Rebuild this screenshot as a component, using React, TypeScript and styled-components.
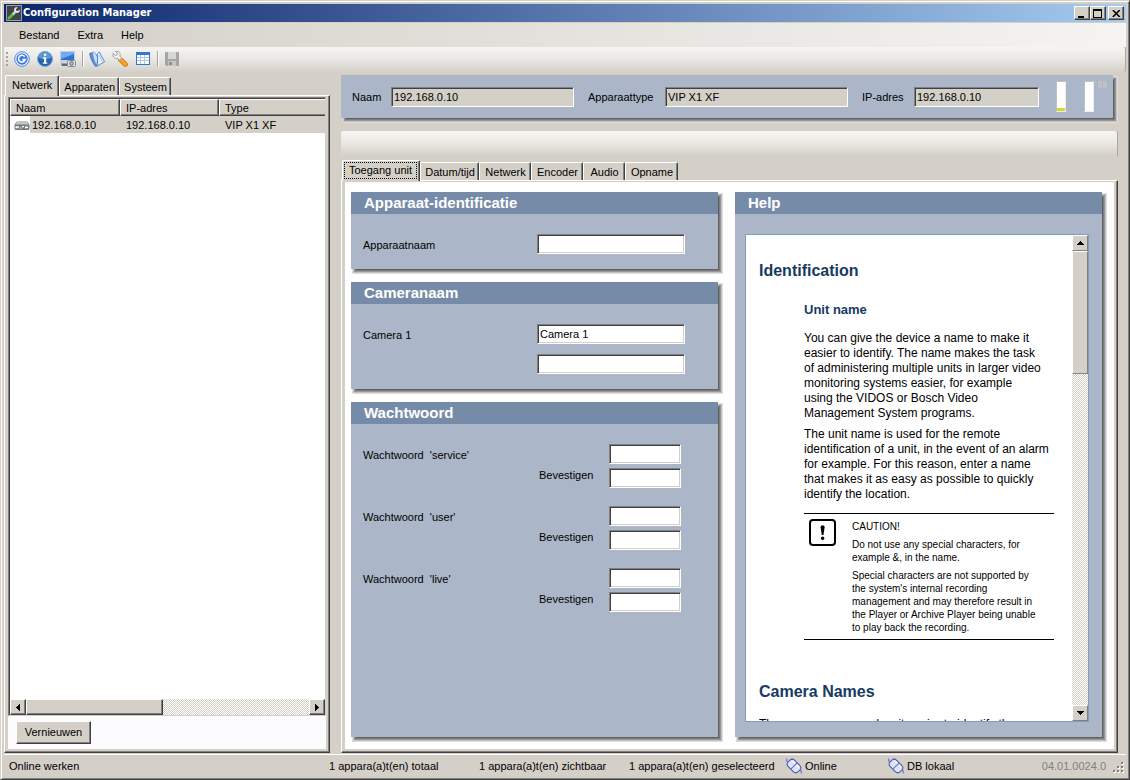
import React from "react";
import styled, { createGlobalStyle, css } from "styled-components";

const c = {
  face: "#d4d0c8",
  dark: "#404040",
  shade: "#808080",
  light: "#ffffff",
  panel: "#abb7c9",
  heading: "#768ba8",
  navy: "#163a63",
  boxLine: "#7f9db9",
};

const raised = css`
  background: ${c.face};
  border: 1px solid;
  border-color: ${c.light} ${c.dark} ${c.dark} ${c.light};
  box-shadow: inset -1px -1px 0 ${c.shade};
`;

const flat = css`
  border-color: ${c.light} ${c.shade} ${c.shade} ${c.light};
  box-shadow: none;
`;

const dropShadow = css`
  box-shadow:
    3px 3px 0 -2px #606060,
    3px 3px 0 -1px #7c7c7c,
    3px 3px 0 0 #979797,
    3px 3px 0 1px #c2c2c2,
    3px 3px 0 2px #dedede;
`;

const dither = css`
  background: repeating-conic-gradient(#ffffff 0 25%, #d4d0c8 0 50%) 0 0 / 2px 2px;
`;

const Global = createGlobalStyle`
  *, *::before, *::after { box-sizing: border-box; }
  body {
    margin: 0;
    background: ${c.face};
    color: #000;
    font: 11px/13px "Liberation Sans", Arial, sans-serif;
  }
  button, input { font: inherit; color: inherit; }
  label { padding-top: 2px; }
  svg { display: block; }
`;

const Window = styled.div`
  display: flex;
  flex-direction: column;
  height: 100vh;
  min-height: 660px;
  padding: 2px;
  background: ${c.face};
  border: 1px solid;
  border-color: ${c.face} ${c.dark} ${c.dark} ${c.face};
  box-shadow: inset 1px 1px 0 ${c.light}, inset -1px -1px 0 ${c.shade};
`;

const Frame = styled.div`
  display: flex;
  flex-direction: column;
  flex: 1;
  min-height: 0;
  padding: 1px;
`;

const TitleBar = styled.header`
  display: flex;
  align-items: center;
  height: 18px;
  flex: none;
  padding: 0 2px;
  margin-bottom: 1px;
  background: linear-gradient(90deg, #0a246a, #a6caf0);
`;

const Title = styled.h1`
  flex: 1;
  margin: 0 0 0 1px;
  color: #fff;
  font: bold 11px/16px "DejaVu Sans Condensed", "DejaVu Sans", sans-serif;
`;

const CaptionButton = styled.button<{ $apart?: boolean }>`
  ${raised}
  display: flex;
  align-items: center;
  justify-content: center;
  width: 16px;
  height: 14px;
  padding: 0;
  margin-left: ${(p) => (p.$apart ? 2 : 0)}px;
`;

const MenuBar = styled.nav`
  display: flex;
  align-items: center;
  flex: none;
  height: 24px;
  padding-left: 6px;
  background: linear-gradient(90deg, ${c.face}, #f5f4f2);
`;

const MenuItem = styled.button`
  padding: 0 9px;
  border: 0;
  background: none;
`;

const ToolBar = styled.div`
  display: flex;
  align-items: center;
  flex: none;
  height: 25px;
  padding: 0 0 1px 2px;
  border-right: 1px solid #a9a69f;
  border-radius: 0 3px 3px 0;
  background: linear-gradient(#f6f5f3, #e9e7e3 50%, ${c.face});
`;

const Grip = styled.span`
  width: 2px;
  height: 14px;
  margin-right: 2px;
  background: repeating-linear-gradient(#a5a29b 0 2px, transparent 2px 4px);
`;

const ToolButton = styled.button`
  display: flex;
  justify-content: center;
  width: 23px;
  padding: 0;
  border: 0;
  background: none;
`;

const Divider = styled.span`
  width: 2px;
  height: 16px;
  margin: 0 1px 0 3px;
  border-left: 1px solid #a5a29b;
  border-right: 1px solid #fff;
`;

const Workspace = styled.div`
  display: flex;
  flex: 1;
  min-height: 0;
  gap: 11px;
  padding: 3px 8px 0 0;
`;

const Sidebar = styled.aside`
  display: flex;
  flex-direction: column;
  flex: 0 0 326px;
  min-height: 0;
`;

const Main = styled.main`
  display: flex;
  flex-direction: column;
  flex: 1;
  min-width: 0;
  min-height: 0;
`;

const Tabs = styled.div`
  display: flex;
  align-items: flex-end;
  flex: none;
  height: 20px;
  padding-left: 1px;
`;

const Tab = styled.button<{ $active?: boolean; $width?: number }>`
  ${(p) => p.$width && `width: ${p.$width}px;`}
  height: 18px;
  padding: 1px 3px 0 4px;
  background: ${c.face};
  border: 1px solid;
  border-color: ${c.light} ${c.dark} transparent ${c.light};
  border-bottom: 0;
  border-radius: 2px 2px 0 0;
  box-shadow: inset -1px 0 0 ${c.shade};
  white-space: nowrap;
  ${(p) =>
    p.$active &&
    css`
      position: relative;
      height: 21px;
      margin-bottom: -1px;
      padding: 0 6px 2px;
    `}
`;

const FocusTab = styled(Tab)`
  padding: 0 2px 2px 1px;
`;

const FocusRing = styled.span`
  display: block;
  padding: 1px 4px;
  border: 1px dotted #000;
`;

const TabPane = styled.section`
  ${raised}
  display: flex;
  flex: 1;
  min-height: 0;
`;

const SidePane = styled(TabPane)`
  flex-direction: column;
  padding: 1px 3px 3px;
`;

const ListView = styled.div`
  display: flex;
  flex-direction: column;
  flex: 1;
  min-height: 0;
  background: #fff;
  border: 1px solid;
  border-color: ${c.shade} ${c.face} ${c.face} ${c.shade};
  box-shadow: inset 1px 1px 0 ${c.dark};
  padding: 1px 0 0 1px;
`;

const Devices = styled.table`
  width: 100%;
  flex: none;
  table-layout: fixed;
  border-collapse: separate;
  border-spacing: 0;
  text-align: left;
`;

const HeadCell = styled.th<{ $width?: number }>`
  ${raised}
  width: ${(p) => (p.$width ? p.$width + "px" : "auto")};
  height: 17px;
  padding: 2px 5px 0;
  font-weight: normal;
  &:last-child {
    border-right: 0;
    box-shadow: inset 0 -1px 0 ${c.shade};
  }
`;

const Cell = styled.td`
  height: 17px;
  padding: 2px 6px 0;
  background: ${c.face};
`;

const DeviceCell = styled(Cell)`
  padding: 2px 0 0 4px;
  background: linear-gradient(90deg, #fff 20px, ${c.face} 20px);
`;

const DeviceName = styled.span`
  display: flex;
  align-items: center;
  gap: 2px;
`;

const Scroll = styled.div<{ $vertical?: boolean }>`
  ${dither}
  display: flex;
  flex: none;
  flex-direction: ${(p) => (p.$vertical ? "column" : "row")};
  justify-content: space-between;
  ${(p) => (p.$vertical ? "width: 16px;" : "height: 16px; margin-top: auto;")}
`;

const ScrollButton = styled.button<{ $flat?: boolean }>`
  ${raised}
  ${(p) => p.$flat && flat}
  display: flex;
  align-items: center;
  justify-content: center;
  flex: none;
  width: 16px;
  height: 16px;
  padding: 0;
`;

const Thumb = styled.div<{ $vertical?: boolean }>`
  ${raised}
  ${(p) => p.$vertical && flat}
  flex: 0 0 ${(p) => (p.$vertical ? 123 : 137)}px;
  margin: ${(p) => (p.$vertical ? "0 0 auto" : "0 auto 0 0")};
`;

const SideFooter = styled.div`
  flex: none;
  padding: 5px 8px;
  background: #fcfcfe;
`;

const PushButton = styled.button`
  ${raised}
  width: 75px;
  height: 23px;
  padding: 0;
`;

const UnitBar = styled.section`
  ${dropShadow}
  display: flex;
  flex: none;
  height: 43px;
  margin-right: 5px;
  padding: 6px 6px 6px 11px;
  background: ${c.panel};
`;

const UnitField = styled.div<{ $label: number; $grow: number }>`
  display: grid;
  grid-template-columns: ${(p) => p.$label}px 1fr;
  align-items: center;
  flex: ${(p) => p.$grow} 1 ${(p) => p.$label + p.$grow}px;
  min-width: 0;
  margin-right: 14px;
`;

const Field = styled.input`
  width: 100%;
  min-width: 0;
  height: 20px;
  padding: 1px 2px 2px;
  background: #fff;
  border: 1px solid;
  border-color: ${c.shade} ${c.light} ${c.light} ${c.shade};
  border-radius: 0;
  box-shadow: inset 1px 1px 0 ${c.dark}, inset -1px -1px 0 ${c.face};
  outline: 0;
  &:read-only {
    padding: 2px 2px 1px;
    background: ${c.face};
  }
`;

const Meters = styled.div`
  display: flex;
  flex: none;
  margin-left: 3px;
`;

const Meter = styled.span<{ $level: number }>`
  width: 10px;
  height: 31px;
  margin-right: 18px;
  border: 1px solid;
  border-color: #c0c0c0 #eeeeee #eeeeee #c0c0c0;
  background: linear-gradient(0deg, #d3da2f ${(p) => p.$level}px, #fff ${(p) => p.$level}px);
  & + & {
    margin-right: 4px;
  }
`;

const Marker = styled.span`
  width: 4px;
  height: 7px;
  background: #c0c0c0;
  & + & {
    margin-left: 1px;
  }
`;

const EmptyBar = styled.div`
  flex: none;
  height: 25px;
  margin: 13px 0 4px;
  border-right: 1px solid #a9a69f;
  border-radius: 2px 3px 0 2px;
  background: linear-gradient(#f6f5f3, #e9e7e3 50%, ${c.face});
`;

const MainPane = styled(TabPane)`
  padding: 1px 3px 3px;
`;

const Columns = styled.div`
  display: grid;
  grid-template-columns: 1fr 1fr;
  gap: 17px;
  flex: 1;
  min-width: 0;
  min-height: 0;
  padding: 10px 12px 12px 6px;
  background: #fff;
`;

const Column = styled.div`
  display: flex;
  flex-direction: column;
  gap: 13px;
  min-width: 0;
  min-height: 0;
`;

const Group = styled.section<{ $fill?: boolean }>`
  ${dropShadow}
  display: flex;
  flex-direction: column;
  flex: ${(p) => (p.$fill ? "1 1 0" : "none")};
  min-height: 0;
  background: ${c.panel};
`;

const GroupTitle = styled.h2`
  flex: none;
  margin: 0;
  padding: 0 13px;
  background: ${c.heading};
  color: #fff;
  font-size: 15px;
  line-height: 22px;
`;

const Form = styled.div<{ $gap: number }>`
  display: flex;
  flex-direction: column;
  gap: ${(p) => p.$gap}px;
  padding: 20px 33px 15px 12px;
`;

const Row = styled.div`
  display: grid;
  grid-template-columns: 1fr 148px;
  align-items: center;
`;

const PasswordRows = styled.div`
  display: grid;
  grid-template-columns: 1fr 70px 72px;
  align-items: center;
  gap: 4px 0;
  padding-right: 4px;
`;

const WideLabel = styled.label`
  grid-column: 1 / 3;
  white-space: pre;
`;

const ConfirmLabel = styled.label`
  grid-column: 2;
  padding: 0 0 5px;
`;

const HelpBox = styled.div`
  display: flex;
  flex: 1 1 0;
  min-height: 0;
  margin: 20px 13px 15px 10px;
  background: #fff;
  border: 1px solid ${c.boxLine};
`;

const Article = styled.article`
  flex: 1;
  min-width: 0;
  overflow: hidden;
  padding: 26px 18px 0 13px;
  font-size: 12px;
  line-height: 15px;
`;

const Topic = styled.h3`
  margin: 0 0 15px;
  color: ${c.navy};
  font-size: 16px;
  line-height: 20px;
`;

const Indent = styled.div`
  margin: 0 0 42px 45px;
`;

const SubTopic = styled.h4`
  margin: 21px 0 13px;
  color: ${c.navy};
  font-size: 13px;
  line-height: 16px;
`;

const Text = styled.p`
  margin: 0 0 6px;
  white-space: nowrap;
`;

const Caution = styled.div`
  display: flex;
  gap: 15px;
  margin-top: 11px;
  padding: 5px 0 5px 5px;
  border: solid #000;
  border-width: 1px 0;
`;

const CautionText = styled.div`
  display: flex;
  flex-direction: column;
  gap: 5px;
  padding-top: 1px;
  font-size: 10px;
  line-height: 13px;
  white-space: nowrap;
  p {
    margin: 0;
  }
`;

const StatusBar = styled.footer`
  display: grid;
  grid-template-columns: 320px 150px 150px 157px 102px 1fr auto 20px;
  align-items: center;
  flex: none;
  height: 22px;
  margin-top: 1px;
  padding: 1px 0 0 5px;
  border-top: 1px solid #fff;
  white-space: nowrap;
`;

const Connection = styled.span`
  display: flex;
  align-items: center;
  gap: 3px;
`;

const Version = styled.span`
  color: ${c.shade};
`;

const Corner = styled.span`
  align-self: end;
  justify-self: end;
  padding: 0 1px 2px 0;
`;

function Arrow({ dir }: { dir: "up" | "down" | "left" | "right" }) {
  const paths = {
    up: "M3 0h1v1h1v1h1v1h1v1H0V3h1V2h1V1h1z",
    down: "M0 0h7v1H6v1H5v1H4v1H3V3H2V2H1V1H0z",
    left: "M4 0v7H3V6H2V5H1V4H0V3h1V2h1V1h1V0z",
    right: "M0 0v7h1V6h1V5h1V4h1V3H3V2H2V1H1V0z",
  };
  return (
    <svg width="7" height="7" viewBox={dir === "up" || dir === "down" ? "0 -1 7 7" : "-1 0 7 7"} shapeRendering="crispEdges" aria-hidden="true">
      <path d={paths[dir]} />
    </svg>
  );
}

const AppIcon = () => (
  <svg width="16" height="16" viewBox="0 0 16 16" aria-hidden="true">
    <rect x=".5" y=".5" width="15" height="15" fill="#414549" stroke="#9aa0a6" />
    <path d="M3 13l4.200-4" stroke="#52c234" strokeWidth="2.800" strokeLinecap="round" />
    <path d="M6.800 9.300l3-2.900" stroke="#d0d4d6" strokeWidth="2.400" />
    <path d="M9.200 2.600C7.900 3.600 7.600 5.600 8.700 6.900s3.300 1.400 4.500.2c.7-.7 1-1.600.9-2.500L12 6.100 10.300 5.700 9.900 4.200l1.900-1.700C10.900 2 10 2.100 9.200 2.600z" fill="#e4e6e8" />
  </svg>
);

const GlobeIcon = () => (
  <svg width="16" height="16" viewBox="0 0 16 16" aria-hidden="true">
    <circle cx="8" cy="8" r="7.300" fill="#f4f8ff" stroke="#4a84e4" />
    <circle cx="8" cy="8" r="5.700" fill="#3a78e0" />
    <path d="M10.700 5.700A3.400 3.400 0 1 0 11.200 8.600H8.300" fill="none" stroke="#fff" strokeWidth="1.600" />
  </svg>
);

const InfoIcon = () => (
  <svg width="16" height="16" viewBox="0 0 16 16" aria-hidden="true">
    <circle cx="8" cy="8" r="7.500" fill="#2465b0" stroke="#7aa6d8" />
    <path d="M1.500 6.500A6.600 6.600 0 0 1 14.500 6.500C11 8.500 5 8.500 1.500 6.500z" fill="#5e97d4" />
    <path d="M7 2.800h2.200v2H7zM6 6.300h3.200v5.200h1.100v1.300H5.900v-1.300H7V7.600H6z" fill="#fff" />
  </svg>
);

const MonitorIcon = () => (
  <svg width="16" height="16" viewBox="0 0 16 16" aria-hidden="true">
    <rect x="0.500" y="0.500" width="14" height="9" fill="#2f72d0" stroke="#c9ced6" />
    <path d="M1 1h13v2L1 8z" fill="#6fabf2" />
    <path d="M0 10h15v2.500H0z" fill="#cfd2d6" />
    <path d="M1 12.500h7V15H2z" fill="#666c74" />
    <rect x="7.500" y="9.500" width="8" height="6" rx="1" fill="#e3e5e8" stroke="#858b93" />
    <circle cx="11.500" cy="12.500" r="1.900" fill="#a9b8cb" stroke="#5c636c" strokeWidth=".8" />
  </svg>
);

const BookIcon = () => (
  <svg width="16" height="16" viewBox="0 0 16 16" aria-hidden="true">
    <path d="M.7 2.500L3.500 1.500 8 5v10l-1.600.2C3.500 12 1.500 7 .7 2.500z" fill="#5b93e6" stroke="#2458ac" strokeWidth=".7" />
    <path d="M3.500 1.500L4.500.7C6.500 2 8 4.500 8.500 7L8 15C5.500 11 4 6 3.500 1.500z" fill="#cfe1fa" stroke="#4d80d4" strokeWidth=".6" />
    <path d="M8.200 3L10.300.9l5.200 9.900L8 15.200C8.800 11 8.800 7 8.200 3z" fill="#e6effc" stroke="#3a70c8" strokeWidth=".8" />
    <path d="M10 4l3.500 6.500" stroke="#a4c3ef" />
  </svg>
);

const WrenchIcon = () => (
  <svg width="16" height="16" viewBox="0 0 16 16" aria-hidden="true">
    <path d="M8.300 8.500l5.200 5" stroke="#c76a08" strokeWidth="4.600" strokeLinecap="round" />
    <path d="M8.300 8.500l5.200 5" stroke="#fba41c" strokeWidth="3.200" strokeLinecap="round" />
    <path d="M1 2.300l2.400 2.200 1.700-.5.300-1.800L3.300.5C5.300-.1 7.400.8 8 2.600c.3 1 .2 1.800-.2 2.600l2 1.900L7.700 9.300 5.700 7.300C3.200 8.300.2 6.100 1 2.300z" fill="#f2f2f2" stroke="#969ba2" strokeWidth=".9" />
  </svg>
);

const GridIcon = () => (
  <svg width="16" height="16" viewBox="0 0 16 16" shapeRendering="crispEdges" aria-hidden="true">
    <path d="M1 1h14v13H1z" fill="#3b74c6" />
    <path d="M2 4h12v9H2z" fill="#a9c6ee" />
    <path d="M2 4h3v2H2zM6 4h3v2H6zM10 4h4v2h-4zM2 7h3v2H2zM6 7h3v2H6zM10 7h4v2h-4zM2 10h3v3H2zM6 10h3v3H6zM10 10h4v3h-4z" fill="#fafcff" />
  </svg>
);

const SaveIcon = () => (
  <svg width="16" height="16" viewBox="0 0 16 16" shapeRendering="crispEdges" aria-hidden="true">
    <path d="M1 1h14v14H2l-1-1z" fill="#a6a6a6" />
    <path d="M4 1h8v7H4z" fill="#d6d6d6" />
    <path d="M4 10h8v5H4z" fill="#c6c6c6" />
    <path d="M5 11h3v3H5z" fill="#8e8e8e" />
  </svg>
);

const DeviceIcon = () => (
  <svg width="16" height="13" viewBox="0 0 16 13" aria-hidden="true">
    <path d="M4 2.500h8c1.500 0 3.500 2.500 3.500 4v3c0 .8-.6 1.500-1.500 1.500H2C1 11 .5 10.300.5 9.500v-3c0-1.500 2-4 3.500-4z" fill="#77797b" />
    <path d="M4.200 2.500h7.600c1 0 2.400 1.500 2.900 3H1.300c.5-1.500 1.900-3 2.900-3z" fill="#c3c5c6" />
    <path d="M1.500 7.200h3.200v2H1.500zM6 8.500h1.500v1H6zM8 7h2v1.200H8zM11 7.500h3v1.700h-3z" fill="#fff" />
    <path d="M5.300 7h1v1h-1z" fill="#5fc86a" />
  </svg>
);

const PlugIcon = () => (
  <svg width="16" height="16" viewBox="0 0 16 16" aria-hidden="true">
    <path d="M.7.500v2.500l2.300 1M15.300 15.500v-2.500l-2.300-1" fill="none" stroke="#6d7ad0" strokeWidth="1.200" />
    <g transform="rotate(45 8 8)">
      <rect x="1" y="3.500" width="14" height="9" rx="3.500" fill="#dfe4fb" stroke="#4554ae" />
      <path d="M8 3.500v9" stroke="#6675cf" strokeWidth="1.200" />
      <path d="M3.500 5.500h3M9.500 5.500h3" stroke="#fff" strokeWidth="1.400" />
    </g>
  </svg>
);

const CautionIcon = () => (
  <svg width="28" height="28" viewBox="0 0 28 28" aria-hidden="true">
    <rect x="1" y="1" width="25" height="25" rx="3" fill="#fff" stroke="#000" strokeWidth="2" />
    <path d="M11.600 8.200a2 2 0 0 1 4 0L14.500 16h-1.800z" />
    <circle cx="13.600" cy="19.200" r="1.700" />
  </svg>
);

const SizeGrip = () => (
  <svg width="12" height="12" viewBox="0 0 12 12" shapeRendering="crispEdges" aria-hidden="true">
    <path d="M9 1h2v2H9zM5 5h2v2H5zM9 5h2v2H9zM1 9h2v2H1zM5 9h2v2H5zM9 9h2v2H9z" fill="#fff" />
    <path d="M8 0h2v2H8zM4 4h2v2H4zM8 4h2v2H8zM0 8h2v2H0zM4 8h2v2H4zM8 8h2v2H8z" fill="#808080" />
  </svg>
);

const tools = [
  [
    ["Web", GlobeIcon],
    ["Info", InfoIcon],
    ["Live", MonitorIcon],
  ],
  [
    ["Handboek", BookIcon],
    ["Instellingen", WrenchIcon],
    ["Tabel", GridIcon],
  ],
  [["Opslaan", SaveIcon]],
] as [string, () => React.JSX.Element][][];

const unitFields = [
  { id: "unit-name", label: "Naam", value: "192.168.0.10", width: 39, grow: 183 },
  { id: "unit-type", label: "Apparaattype", value: "VIP X1 XF", width: 77, grow: 183 },
  { id: "unit-ip", label: "IP-adres", value: "192.168.0.10", width: 52, grow: 125 },
];

const pages: [string, number][] = [
  ["Datum/tijd", 59],
  ["Netwerk", 52],
  ["Encoder", 52],
  ["Audio", 42],
  ["Opname", 53],
];

const lines = (items: string[]) =>
  items.map((line, i) => (
    <React.Fragment key={line}>
      {i > 0 && <br />}
      {line}
    </React.Fragment>
  ));

export default function App() {
  return (
    <>
      <Global />
      <Window>
        <Frame>
          <TitleBar>
            <AppIcon />
            <Title>Configuration Manager</Title>
            <CaptionButton aria-label="Minimaliseren">
              <svg width="10" height="9" shapeRendering="crispEdges"><path d="M1 7h6v2H1z" /></svg>
            </CaptionButton>
            <CaptionButton aria-label="Maximaliseren">
              <svg width="10" height="9" shapeRendering="crispEdges"><path d="M0 0h9v9H0zM1 2v6h7V2z" fillRule="evenodd" /></svg>
            </CaptionButton>
            <CaptionButton aria-label="Sluiten" $apart>
              <svg width="9" height="7" viewBox="0 0 9 7"><path d="M.8 0l7 7M7.800 0l-7 7" stroke="#000" strokeWidth="1.600" /></svg>
            </CaptionButton>
          </TitleBar>
          <MenuBar>
            <MenuItem>Bestand</MenuItem>
            <MenuItem>Extra</MenuItem>
            <MenuItem>Help</MenuItem>
          </MenuBar>
          <ToolBar>
            <Grip />
            {tools.map((group, i) => (
              <React.Fragment key={i}>
                {i > 0 && <Divider />}
                {group.map(([name, Icon]) => (
                  <ToolButton key={name} aria-label={name}>
                    <Icon />
                  </ToolButton>
                ))}
              </React.Fragment>
            ))}
          </ToolBar>
          <Workspace>
            <Sidebar>
              <Tabs role="tablist">
                <Tab role="tab" aria-selected $active>Netwerk</Tab>
                <Tab role="tab">Apparaten</Tab>
                <Tab role="tab">Systeem</Tab>
              </Tabs>
              <SidePane>
                <ListView>
                  <Devices>
                    <thead>
                      <tr>
                        <HeadCell $width={110}>Naam</HeadCell>
                        <HeadCell $width={99}>IP-adres</HeadCell>
                        <HeadCell>Type</HeadCell>
                      </tr>
                    </thead>
                    <tbody>
                      <tr>
                        <DeviceCell>
                          <DeviceName>
                            <DeviceIcon />
                            192.168.0.10
                          </DeviceName>
                        </DeviceCell>
                        <Cell>192.168.0.10</Cell>
                        <Cell>VIP X1 XF</Cell>
                      </tr>
                    </tbody>
                  </Devices>
                  <Scroll>
                    <ScrollButton aria-label="Naar links"><Arrow dir="left" /></ScrollButton>
                    <Thumb />
                    <ScrollButton aria-label="Naar rechts"><Arrow dir="right" /></ScrollButton>
                  </Scroll>
                </ListView>
                <SideFooter>
                  <PushButton>Vernieuwen</PushButton>
                </SideFooter>
              </SidePane>
            </Sidebar>
            <Main>
              <UnitBar>
                {unitFields.map((f) => (
                  <UnitField key={f.id} $label={f.width} $grow={f.grow}>
                    <label htmlFor={f.id}>{f.label}</label>
                    <Field id={f.id} defaultValue={f.value} readOnly />
                  </UnitField>
                ))}
                <Meters>
                  <Meter $level={3} />
                  <Meter $level={0} />
                  <Marker />
                  <Marker />
                </Meters>
              </UnitBar>
              <EmptyBar />
              <Tabs role="tablist">
                <FocusTab role="tab" aria-selected $active>
                  <FocusRing>Toegang unit</FocusRing>
                </FocusTab>
                {pages.map(([name, width]) => (
                  <Tab role="tab" key={name} $width={width}>{name}</Tab>
                ))}
              </Tabs>
              <MainPane>
                <Columns>
                  <Column>
                    <Group>
                      <GroupTitle>Apparaat-identificatie</GroupTitle>
                      <Form $gap={10}>
                        <Row>
                          <label htmlFor="device">Apparaatnaam</label>
                          <Field id="device" />
                        </Row>
                      </Form>
                    </Group>
                    <Group>
                      <GroupTitle>Cameranaam</GroupTitle>
                      <Form $gap={10}>
                        <Row>
                          <label htmlFor="camera">Camera 1</label>
                          <Field id="camera" defaultValue="Camera 1" />
                        </Row>
                        <Row>
                          <span />
                          <Field aria-label="Camera 1, regel 2" />
                        </Row>
                      </Form>
                    </Group>
                    <Group $fill>
                      <GroupTitle>Wachtwoord</GroupTitle>
                      <Form $gap={18}>
                        {["service", "user", "live"].map((name) => (
                          <PasswordRows key={name}>
                            <WideLabel htmlFor={name}>{`Wachtwoord  '${name}'`}</WideLabel>
                            <Field id={name} type="password" />
                            <ConfirmLabel htmlFor={name + "-confirm"}>Bevestigen</ConfirmLabel>
                            <Field id={name + "-confirm"} type="password" />
                          </PasswordRows>
                        ))}
                      </Form>
                    </Group>
                  </Column>
                  <Column>
                    <Group $fill>
                      <GroupTitle>Help</GroupTitle>
                      <HelpBox>
                        <Article>
                          <Topic>Identification</Topic>
                          <Indent>
                            <SubTopic>Unit name</SubTopic>
                            <Text>
                              {lines([
                                "You can give the device a name to make it",
                                "easier to identify. The name makes the task",
                                "of administering multiple units in larger video",
                                "monitoring systems easier, for example",
                                "using the VIDOS or Bosch Video",
                                "Management System programs.",
                              ])}
                            </Text>
                            <Text>
                              {lines([
                                "The unit name is used for the remote",
                                "identification of a unit, in the event of an alarm",
                                "for example. For this reason, enter a name",
                                "that makes it as easy as possible to quickly",
                                "identify the location.",
                              ])}
                            </Text>
                            <Caution>
                              <CautionIcon />
                              <CautionText>
                                <p>CAUTION!</p>
                                <p>{lines(["Do not use any special characters, for", "example &, in the name."])}</p>
                                <p>
                                  {lines([
                                    "Special characters are not supported by",
                                    "the system's internal recording",
                                    "management and may therefore result in",
                                    "the Player or Archive Player being unable",
                                    "to play back the recording.",
                                  ])}
                                </p>
                              </CautionText>
                            </Caution>
                          </Indent>
                          <Topic>Camera Names</Topic>
                          <Text>The camera name makes it easier to identify the</Text>
                        </Article>
                        <Scroll $vertical>
                          <ScrollButton aria-label="Omhoog" $flat><Arrow dir="up" /></ScrollButton>
                          <Thumb $vertical />
                          <ScrollButton aria-label="Omlaag" $flat><Arrow dir="down" /></ScrollButton>
                        </Scroll>
                      </HelpBox>
                    </Group>
                  </Column>
                </Columns>
              </MainPane>
            </Main>
          </Workspace>
          <StatusBar>
            <span>Online werken</span>
            <span>1 appara(a)t(en) totaal</span>
            <span>1 appara(a)t(en) zichtbaar</span>
            <span>1 appara(a)t(en) geselecteerd</span>
            <Connection><PlugIcon />Online</Connection>
            <Connection><PlugIcon />DB lokaal</Connection>
            <Version>04.01.0024.0</Version>
            <Corner><SizeGrip /></Corner>
          </StatusBar>
        </Frame>
      </Window>
    </>
  );
}
